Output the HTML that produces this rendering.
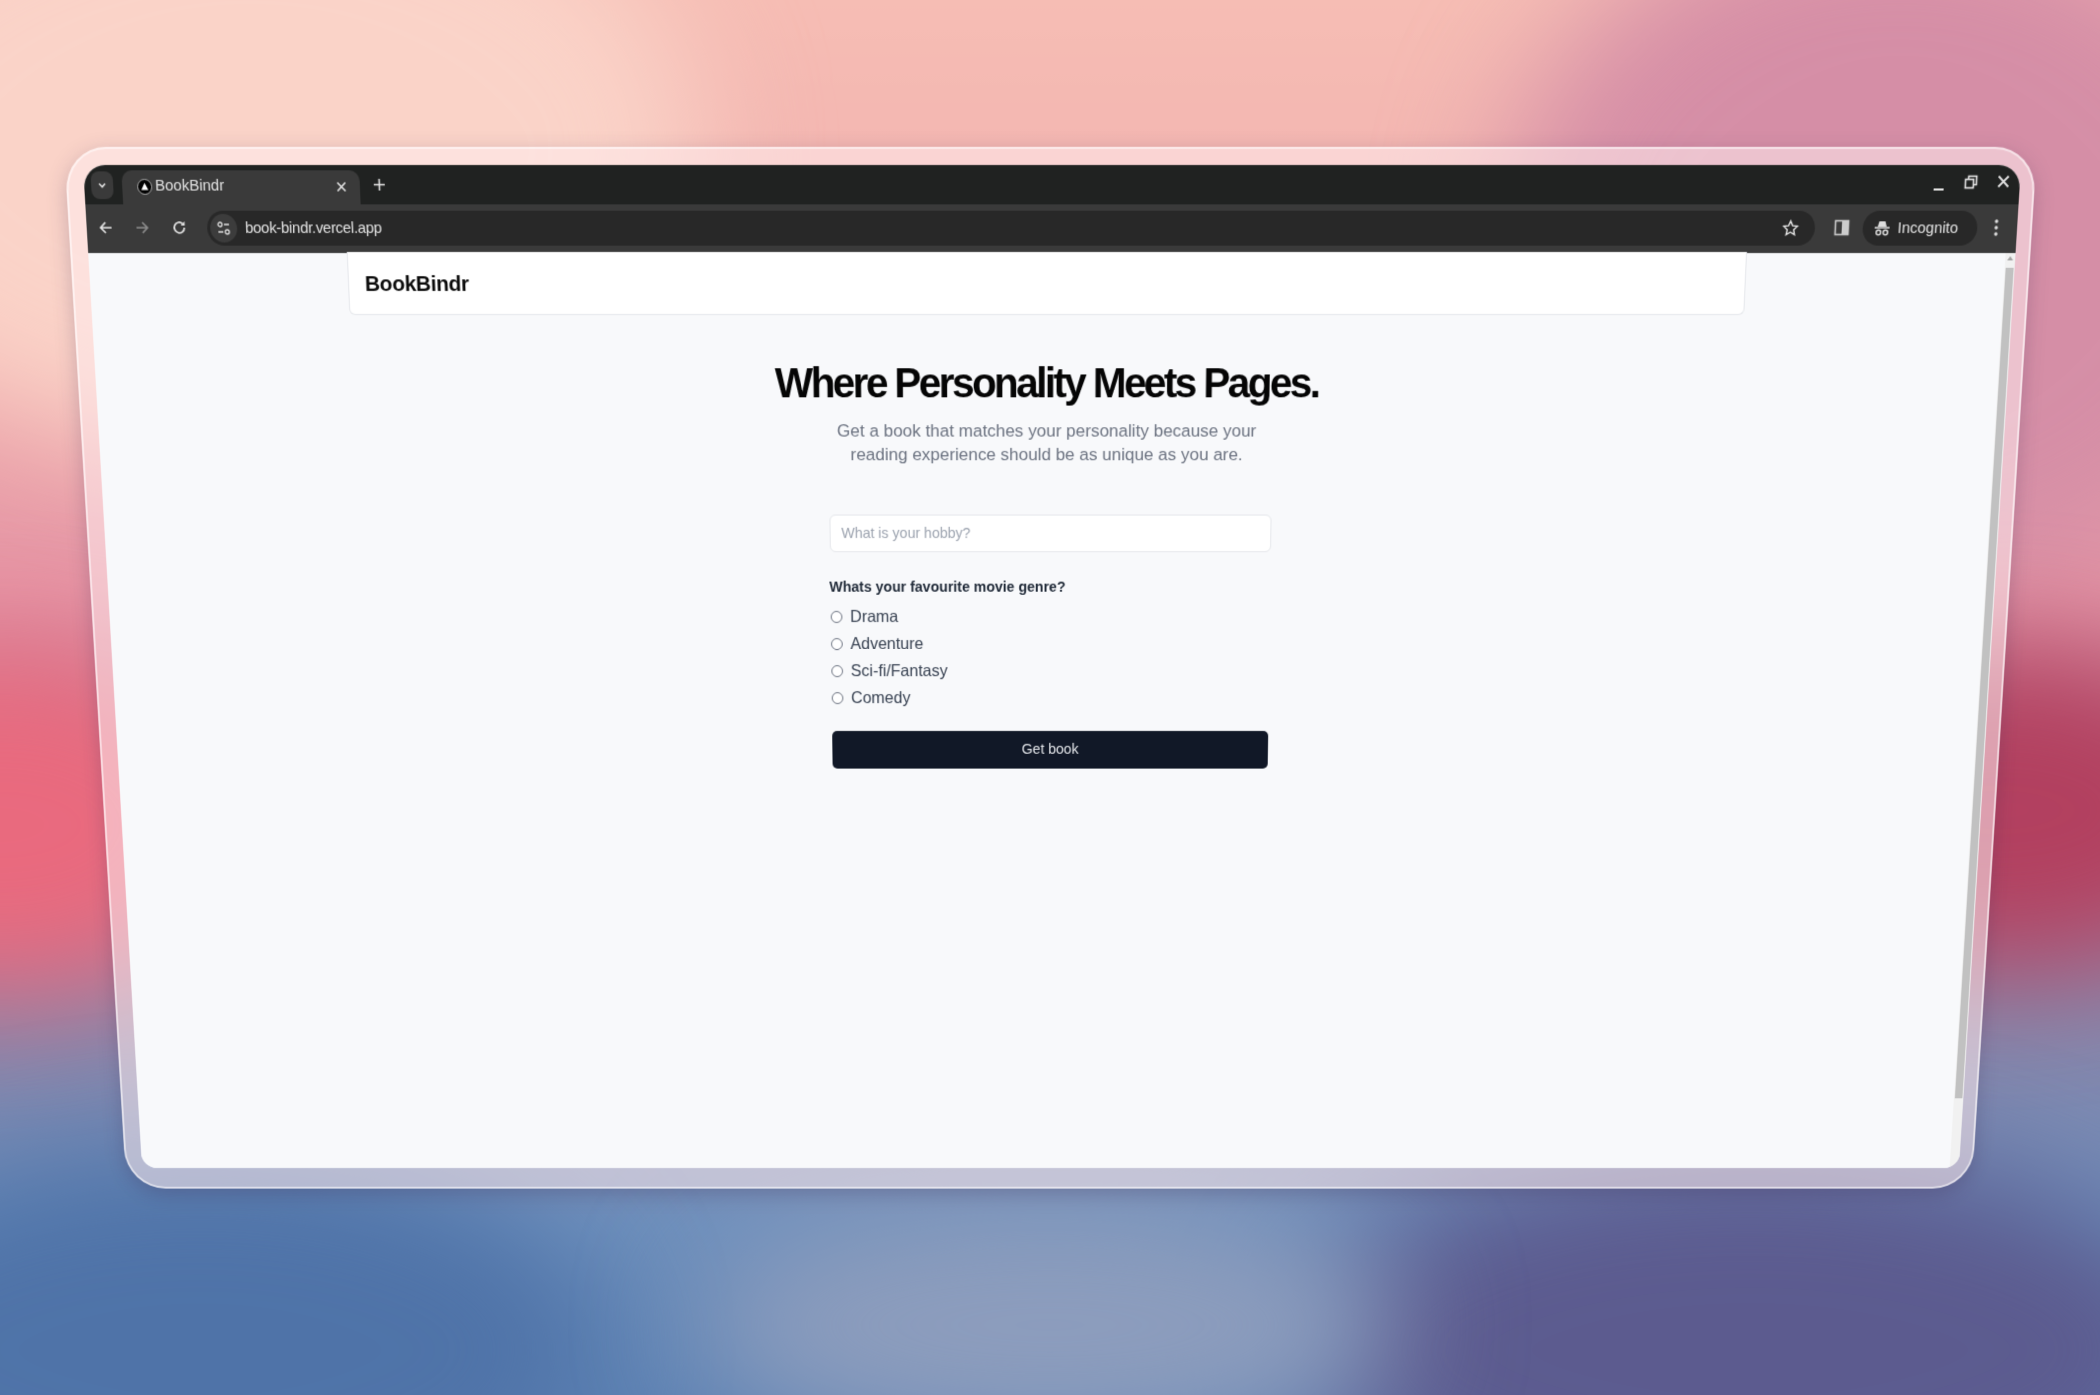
<!DOCTYPE html>
<html><head><meta charset="utf-8"><style>
*{margin:0;padding:0;box-sizing:border-box}
html,body{width:2100px;height:1395px;overflow:hidden}
#root{position:absolute;left:0;top:0;width:2100px;height:1395px;overflow:hidden;
background:linear-gradient(180deg,#f6bdb4 0%,#f0aeae 25%,#e595a5 42%,#c27894 55%,#8a86aa 72%,#6d8fbc 88%,#5f84b5 100%);}
body{font-family:"Liberation Sans",sans-serif}
.blob{position:absolute;border-radius:50%;filter:blur(60px)}
#win{position:absolute;left:0;top:0;width:1938px;height:1003px;transform-origin:0 0;
transform:matrix3d(1,0,0,0, 0.06826,1.07755,0,0.00006639, 0,0,1,0, 83,165,0,1);}
.frame{position:absolute;left:-18px;top:-17px;right:-15px;bottom:-22px;border-radius:42px;
background:rgba(255,236,238,0.55);border:2px solid rgba(255,255,255,0.55);box-shadow:0 6px 20px rgba(60,40,80,.25)}
.browser{position:absolute;inset:0;border-radius:22px 22px 16px 16px;overflow:hidden;background:#f8f9fb}
.tabbar{position:absolute;left:0;top:0;width:100%;height:38px;background:#202221}
.toolbar{position:absolute;left:0;top:37px;width:100%;height:46px;background:#3a3a3a}
.tab{position:absolute;left:38px;top:5px;width:238px;height:33px;background:#3a3a3a;border-radius:10px 10px 0 0;color:#e3e3e3;font-size:15px}
.omni{position:absolute;left:121px;top:6px;width:1614px;height:33px;border-radius:17px;background:#282828}
.page{position:absolute;left:0;top:83px;width:1928px;height:920px;background:#f8f9fb}
.card{position:absolute;left:260px;top:-1px;width:1408px;height:60px;background:#fff;border:1px solid #e5e7eb;border-top:none;border-radius:0 0 6px 6px}
.card span{position:absolute;left:16px;top:19px;font-size:21px;font-weight:bold;color:#0b0b0b;letter-spacing:-0.3px}
h1{position:absolute;left:0;width:1928px;top:100px;text-align:center;font-size:41px;line-height:48px;font-weight:bold;letter-spacing:-2.6px;color:#050505}
.sub{position:absolute;left:0;width:1928px;top:159px;text-align:center;font-size:17.4px;line-height:23px;color:#6b7280}
.inp{position:absolute;left:742px;top:252px;width:452px;height:37px;background:#fff;border:1px solid #e5e7eb;border-radius:6px;font-size:14.5px;color:#9ca3af;padding:10px 0 0 11px}
.lbl{position:absolute;left:741px;top:316px;font-size:14.5px;font-weight:bold;color:#1f2937}
.r{position:absolute;left:742px;font-size:16.5px;color:#374151;height:20px;line-height:20px}
.r i{position:absolute;left:0;top:4px;width:12px;height:12px;border:1px solid #6b7280;border-radius:50%;background:#fff}
.r span{position:absolute;left:20px;top:0;white-space:nowrap}
.btn{position:absolute;left:742px;top:467px;width:452px;height:38px;background:#111827;border-radius:5px;color:#e5e7eb;font-size:14.5px;text-align:center;line-height:38px}
.sb{position:absolute;left:1928px;top:83px;width:10px;height:920px;background:#f1f1f1}
.thumb{position:absolute;left:1px;top:14px;width:8px;height:832px;background:#c1c1c1}
.ic{position:absolute}
</style></head><body><div id="root">
<div class="blob" style="left:-200px;top:-150px;width:900px;height:600px;background:#fad3c8"></div>
<div class="blob" style="left:1500px;top:-100px;width:800px;height:700px;background:#d58ea6"></div>
<div class="blob" style="left:-250px;top:650px;width:500px;height:350px;background:#e96a7e"></div>
<div class="blob" style="left:1750px;top:650px;width:500px;height:320px;background:#b2405f"></div>
<div class="blob" style="left:-200px;top:1150px;width:800px;height:400px;background:#4f73a8"></div>
<div class="blob" style="left:1300px;top:1150px;width:900px;height:400px;background:#5c5b8f"></div>
<div class="blob" style="left:700px;top:1200px;width:700px;height:250px;background:#8d9dbd"></div>

<div id="win">
 <div class="frame"></div>
 <div class="browser">
  <div class="tabbar">
   <div style="position:absolute;left:7px;top:6px;width:22px;height:26px;border-radius:8px;background:#3a3a3a"></div>
   <svg class="ic" style="left:12px;top:13px" width="12" height="12" viewBox="0 0 12 12"><path d="M3 4.5l3 3 3-3" stroke="#ddd" stroke-width="1.6" fill="none"/></svg>
   <div class="tab">
    <svg class="ic" style="left:15px;top:8px" width="15" height="15" viewBox="0 0 15 15"><circle cx="7.5" cy="7.5" r="7" fill="#000" stroke="#ccc" stroke-width=".8"/><path d="M7.5 3.8L11 10.5H4z" fill="#fff"/></svg>
    <span style="position:absolute;left:33px;top:6px">BookBindr</span>
    <svg class="ic" style="left:214px;top:10px" width="11" height="11" viewBox="0 0 11 11"><path d="M1.5 1.5l8 8M9.5 1.5l-8 8" stroke="#e3e3e3" stroke-width="1.6"/></svg>
   </div>
   <svg class="ic" style="left:289px;top:12px" width="13" height="13" viewBox="0 0 13 13"><path d="M6.5 1v11M1 6.5h11" stroke="#e3e3e3" stroke-width="1.6"/></svg>
   <svg class="ic" style="left:1850px;top:12px" width="14" height="14" viewBox="0 0 14 14"><path d="M2 11h10" stroke="#e3e3e3" stroke-width="1.8"/></svg>
   <svg class="ic" style="left:1882px;top:9px" width="14" height="14" viewBox="0 0 14 14"><rect x="1.5" y="4.5" width="8" height="8" fill="none" stroke="#e3e3e3" stroke-width="1.6"/><path d="M4.5 4.5V1.5h8v8h-3" fill="none" stroke="#e3e3e3" stroke-width="1.6"/></svg>
   <svg class="ic" style="left:1915px;top:9px" width="13" height="13" viewBox="0 0 13 13"><path d="M1.5 1.5l10 10M11.5 1.5l-10 10" stroke="#e3e3e3" stroke-width="1.8"/></svg>
  </div>
  <div class="toolbar">
   <svg class="ic" style="left:11px;top:14px" width="16" height="16" viewBox="0 0 16 16"><path d="M14 8H3M8 3L3 8l5 5" stroke="#e3e3e3" stroke-width="1.7" fill="none"/></svg>
   <svg class="ic" style="left:48px;top:14px" width="16" height="16" viewBox="0 0 16 16"><path d="M2 8h11M8 3l5 5-5 5" stroke="#8a8a8a" stroke-width="1.7" fill="none"/></svg>
   <svg class="ic" style="left:85px;top:14px" width="16" height="16" viewBox="0 0 16 16"><path d="M13 8a5 5 0 1 1-1.5-3.6" stroke="#e3e3e3" stroke-width="1.7" fill="none"/><path d="M13.5 2v4h-4z" fill="#e3e3e3"/></svg>
   <div class="omni">
    <div style="position:absolute;left:3px;top:3px;width:27px;height:27px;border-radius:50%;background:#3c3c3c"></div>
    <svg class="ic" style="left:9px;top:9px" width="15" height="15" viewBox="0 0 15 15"><circle cx="4" cy="4" r="2" fill="none" stroke="#ddd" stroke-width="1.3"/><path d="M8 4h5M2 11h5" stroke="#ddd" stroke-width="1.4"/><circle cx="11" cy="11" r="2" fill="none" stroke="#ddd" stroke-width="1.3"/></svg>
    <span style="position:absolute;left:38px;top:8px;font-size:15px;color:#e3e3e3;letter-spacing:-0.3px">book-bindr.vercel.app</span>
    <svg class="ic" style="left:1581px;top:8px" width="17" height="17" viewBox="0 0 24 24"><path d="M12 2.5l2.9 6.2 6.7.7-5 4.6 1.4 6.7L12 17.3l-5.9 3.4 1.4-6.7-5-4.6 6.7-.7z" fill="none" stroke="#e3e3e3" stroke-width="2"/></svg>
   </div>
   <svg class="ic" style="left:1754px;top:14px" width="16" height="16" viewBox="0 0 16 16"><rect x="1.5" y="1.5" width="13" height="13" fill="none" stroke="#ccc" stroke-width="1.6"/><rect x="8" y="2" width="6" height="12" fill="#ccc"/></svg>
   <div style="position:absolute;left:1783px;top:6px;width:115px;height:33px;border-radius:17px;background:#282828;color:#e3e3e3;font-size:15px">
    <svg class="ic" style="left:11px;top:8px" width="17" height="17" viewBox="0 0 17 17"><path d="M4 7l1.5-5h6L13 7z" fill="#ddd"/><path d="M1 8h15" stroke="#ddd" stroke-width="1.6"/><circle cx="5" cy="12.5" r="2.3" fill="none" stroke="#ddd" stroke-width="1.5"/><circle cx="12" cy="12.5" r="2.3" fill="none" stroke="#ddd" stroke-width="1.5"/></svg>
    <span style="position:absolute;left:35px;top:8px">Incognito</span>
   </div>
   <svg class="ic" style="left:1914px;top:13px" width="6" height="18" viewBox="0 0 6 18"><circle cx="3" cy="3" r="1.7" fill="#ddd"/><circle cx="3" cy="9" r="1.7" fill="#ddd"/><circle cx="3" cy="15" r="1.7" fill="#ddd"/></svg>
  </div>
  <div class="page">
   <div class="card"><span>BookBindr</span></div>
   <h1>Where Personality Meets Pages.</h1>
   <div class="sub">Get a book that matches your personality because your<br>reading experience should be as unique as you are.</div>
   <div class="inp">What is your hobby?</div>
   <div class="lbl">Whats your favourite movie genre?</div>
   <div class="r" style="top:343px"><i></i><span>Drama</span></div>
   <div class="r" style="top:370px"><i></i><span>Adventure</span></div>
   <div class="r" style="top:397px"><i></i><span>Sci-fi/Fantasy</span></div>
   <div class="r" style="top:424px"><i></i><span>Comedy</span></div>
   <div class="btn">Get book</div>
  </div>
  <div class="sb"><div style="position:absolute;left:2px;top:3px;border-left:3px solid transparent;border-right:3px solid transparent;border-bottom:4px solid #a3a3a3"></div><div class="thumb"></div></div>
 </div>
</div>
</div></body></html>
